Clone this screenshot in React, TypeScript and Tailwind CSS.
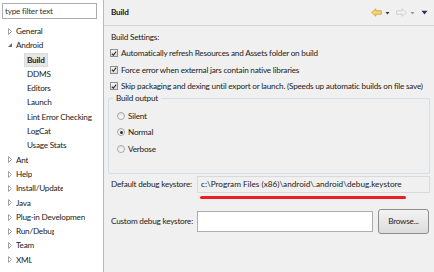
import { ReactNode } from "react";

const androidItems = ["Build", "DDMS", "Editors", "Launch", "Lint Error Checking", "LogCat", "Usage Stats"];
// some labels are clipped by the tree in the screenshot
const topItems: { label: string; clip?: string }[] = [
  { label: "Ant" },
  { label: "Help" },
  { label: "Install/Update", clip: "w-[47px]" },
  { label: "Java" },
  { label: "Plug-in Development", clip: "w-[69px]" },
  { label: "Run/Debug", clip: "w-[38px]" },
  { label: "Team" },
  { label: "XML" },
];

const Arrow = ({ open }: { open?: boolean }) =>
  open ? (
    <svg width="6" height="6" viewBox="0 0 6 6" className="shrink-0">
      <path d="M5 1 L5 5 L1 5 Z" fill="#6b6b6b" />
    </svg>
  ) : (
    <svg width="6" height="7" viewBox="0 0 6 7" className="shrink-0">
      <path d="M1.5 0.5 L4.5 3.5 L1.5 6.5 Z" fill="none" stroke="#9a9a9a" strokeWidth="0.9" />
    </svg>
  );

const TreeRow = ({ children, arrow, open }: { children: ReactNode; arrow?: boolean; open?: boolean }) => (
  <div className="h-[14.3px] flex items-center pl-[7px] gap-[3px]">
    {arrow && <Arrow open={open} />}
    {children}
  </div>
);

const Check = () => (
  <div className="w-[8px] h-[8px] border border-[#8e8f8f] bg-gradient-to-b from-[#f4f4f4] to-[#dcdcdc] flex items-center justify-center shrink-0">
    <svg width="7" height="7" viewBox="0 0 7 7">
      <path d="M1 3.8 L2.8 5.5 L6 1.3" fill="none" stroke="#2a2a2a" strokeWidth="1.3" />
    </svg>
  </div>
);

const Radio = ({ on }: { on?: boolean }) => (
  <div className="w-[8px] h-[8px] rounded-full border border-[#a9a9a9] bg-gradient-to-b from-[#e6e6e6] to-[#f8f8f8] flex items-center justify-center shrink-0">
    {on && <div className="w-[3px] h-[3px] rounded-full bg-[#333]" />}
  </div>
);

export default function App() {
  return (
    <div
      className="w-[434px] h-[272px] flex overflow-hidden text-[8.2px] tracking-[-0.22px] text-[#1b1b1b]"
      style={{ fontFamily: 'Lato, "Liberation Sans", sans-serif' }}
    >
      {/* left tree */}
      <div className="w-[103px] bg-white pt-[3px] shrink-0">
        <div className="ml-[2px] w-[95px] h-[16px] border border-[#a9acb0] flex items-center px-[2px] text-[#333]">
          type filter text
        </div>
        <div className="mt-[5px]">
          <TreeRow arrow>
            <span>General</span>
          </TreeRow>
          <TreeRow arrow open>
            <span>Android</span>
          </TreeRow>
          {androidItems.map((it) => (
            <div key={it} className="h-[14.3px] flex items-center pl-[24px]">
              <span
                className={
                  it === "Build"
                    ? "px-[2px] bg-[#e6e6e6] border border-[#dadada] font-bold leading-[12px]"
                    : "px-[3px] whitespace-nowrap"
                }
              >
                {it}
              </span>
            </div>
          ))}
          {topItems.map((it) => (
            <TreeRow key={it.label} arrow>
              <span className={`whitespace-nowrap overflow-hidden ${it.clip ?? ""}`}>{it.label}</span>
            </TreeRow>
          ))}
        </div>
      </div>

      <div className="w-px bg-[#b9b9b9] shrink-0" />

      {/* right page */}
      <div className="flex-1 min-w-0 overflow-hidden bg-[#f0f0f0] flex flex-col">
        <div className="h-[26px] shrink-0 flex items-center justify-between pl-[7px] pr-[6px] border-b border-[#d5d5d5]">
          <span className="font-bold">Build</span>
          <div className="flex items-center gap-[3px]">
            <svg width="11" height="9" viewBox="0 0 11 9">
              <path d="M0.7 4.5 L4.8 0.8 L4.8 2.8 L10.3 2.8 L10.3 6.2 L4.8 6.2 L4.8 8.2 Z" fill="#f6d67a" stroke="#d8a232" strokeWidth="0.9" />
            </svg>
            <svg width="5" height="4" viewBox="0 0 5 4"><path d="M0.5 1 L4.5 1 L2.5 3.5 Z" fill="#333" /></svg>
            <svg width="11" height="9" viewBox="0 0 11 9" className="ml-[3px]">
              <path d="M10.3 4.5 L6.2 0.8 L6.2 2.8 L0.7 2.8 L0.7 6.2 L6.2 6.2 L6.2 8.2 Z" fill="#f3f3f3" stroke="#c9c9c9" strokeWidth="0.9" />
            </svg>
            <svg width="5" height="4" viewBox="0 0 5 4"><path d="M0.5 1 L4.5 1 L2.5 3.5 Z" fill="#9a9a9a" /></svg>
            <svg width="7" height="5" viewBox="0 0 7 5" className="ml-[3px]"><path d="M0.5 0.8 L6.5 0.8 L3.5 4.5 Z" fill="#2b2f6b" /></svg>
          </div>
        </div>

        <div className="pl-[7px] pr-[4px] pt-[4px]">
          <div className="h-[14px] flex items-center">Build Settings:</div>
          <div className="flex flex-col mt-[1px]">
            {[
              "Automatically refresh Resources and Assets folder on build",
              "Force error when external jars contain native libraries",
              "Skip packaging and dexing until export or launch. (Speeds up automatic builds on file save)",
            ].map((t) => (
              <div key={t} className="h-[16.5px] flex items-center gap-[3px] -ml-[1px] whitespace-nowrap">
                <Check />
                <span>{t}</span>
              </div>
            ))}
          </div>

          <div className="relative mt-[3px] -ml-[3px] border border-[#d5dfe5] rounded-[2px] h-[76px] pt-[9px] pl-[8px]">
            <span className="absolute -top-[7px] left-[4px] px-[3px] bg-[#f0f0f0]">Build output</span>
            {["Silent", "Normal", "Verbose"].map((t) => (
              <div key={t} className="h-[16.5px] flex items-center gap-[3px]">
                <Radio on={t === "Normal"} />
                <span>{t}</span>
              </div>
            ))}
          </div>

          <div className="mt-[2px] flex items-center h-[18px]">
            <span className="w-[86px] shrink-0 whitespace-nowrap">Default debug keystore:</span>
            <div className="relative flex-1 h-[17px] border border-[#d9d9d9] bg-[#f0f0f0] flex items-center pl-[3px] whitespace-nowrap tracking-normal">
              c:\Program Files (x86)\android\.android\debug.keystore
              {/* red marker stroke drawn over the screenshot */}
              <div className="absolute left-[2px] top-[19px] w-[206px] h-[3px] rounded-full bg-[#ee1c25]" />
            </div>
          </div>

          <div className="mt-[15px] flex items-center h-[25px]">
            <span className="w-[86px] shrink-0 whitespace-nowrap">Custom debug keystore:</span>
            <div className="w-[176px] h-[21px] border border-[#abadb3] bg-white" />
            <button className="ml-[5px] w-[51px] h-[25px] border border-[#8d8d8d] rounded-[3px] bg-gradient-to-b from-[#f3f3f3] to-[#dcdcdc] flex items-center justify-center">
              Browse...
            </button>
          </div>
        </div>
      </div>
    </div>
  );
}
